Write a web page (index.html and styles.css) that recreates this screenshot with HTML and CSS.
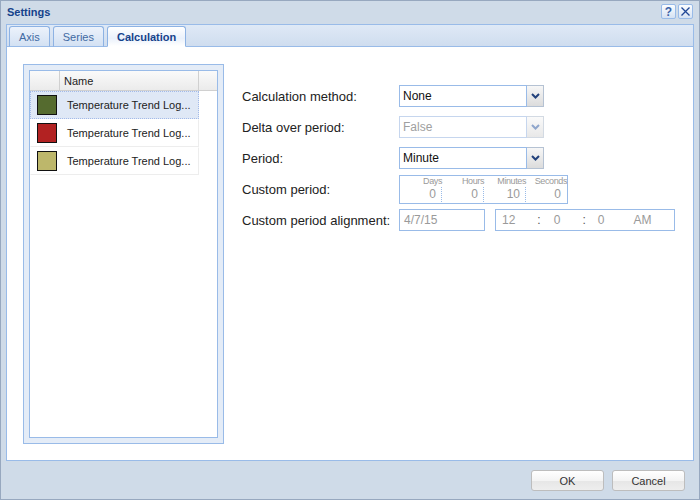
FILE: index.html
```html
<!DOCTYPE html>
<html>
<head>
<meta charset="utf-8">
<link rel="stylesheet" href="styles.css">
</head>
<body>
<div class="window">
  <div class="titlebar">
    <span class="title">Settings</span>
    <div class="tools">
      <span class="tool help">?</span>
      <span class="tool close"><svg width="11" height="11" viewBox="0 0 11 11"><path d="M1.5 1.5 L9.5 9.5 M9.5 1.5 L1.5 9.5" stroke="#1f4696" stroke-width="1.3" fill="none"/></svg></span>
    </div>
  </div>
  <div class="main">
    <div class="tabstrip">
      <div class="tab">Axis</div>
      <div class="tab">Series</div>
      <div class="tab active">Calculation</div>
    </div>
    <div class="body">
      <div class="gridpanel">
        <div class="grid">
          <div class="grid-header">
            <div class="hcell c1"></div>
            <div class="hcell c2">Name</div>
            <div class="hcell filler"></div>
          </div>
          <div class="row selected">
            <div class="cell c1"><span class="swatch sw-green"></span></div>
            <div class="cell c2">Temperature Trend Log...</div>
          </div>
          <div class="row">
            <div class="cell c1"><span class="swatch sw-red"></span></div>
            <div class="cell c2">Temperature Trend Log...</div>
          </div>
          <div class="row">
            <div class="cell c1"><span class="swatch sw-khaki"></span></div>
            <div class="cell c2">Temperature Trend Log...</div>
          </div>
        </div>
      </div>
      <div class="form">
        <div class="frow r1">
          <label class="flabel">Calculation method:</label>
          <div class="combo">
            <div class="combo-input">None</div>
            <div class="combo-trigger"><svg width="9" height="6" viewBox="0 0 9 6"><path d="M1 1 L4.5 4.5 L8 1" stroke="#23427c" stroke-width="2" fill="none"/></svg></div>
          </div>
        </div>
        <div class="frow r2">
          <label class="flabel">Delta over period:</label>
          <div class="combo disabled">
            <div class="combo-input">False</div>
            <div class="combo-trigger"><svg width="9" height="6" viewBox="0 0 9 6"><path d="M1 1 L4.5 4.5 L8 1" stroke="#8fa6cc" stroke-width="2" fill="none"/></svg></div>
          </div>
        </div>
        <div class="frow r3">
          <label class="flabel">Period:</label>
          <div class="combo">
            <div class="combo-input">Minute</div>
            <div class="combo-trigger"><svg width="9" height="6" viewBox="0 0 9 6"><path d="M1 1 L4.5 4.5 L8 1" stroke="#23427c" stroke-width="2" fill="none"/></svg></div>
          </div>
        </div>
        <div class="frow r4">
          <label class="flabel">Custom period:</label>
          <div class="period">
            <div class="pcol"><span class="plabel">Days</span><span class="pval">0</span></div>
            <div class="pcol"><span class="plabel">Hours</span><span class="pval">0</span></div>
            <div class="pcol"><span class="plabel">Minutes</span><span class="pval">10</span></div>
            <div class="pcol last"><span class="plabel">Seconds</span><span class="pval">0</span></div>
          </div>
        </div>
        <div class="frow r5">
          <label class="flabel">Custom period alignment:</label>
          <div class="datefield">4/7/15</div>
          <div class="timefield">
            <span class="t-h">12</span>
            <span class="t-sep s1">:</span>
            <span class="t-m">0</span>
            <span class="t-sep s2">:</span>
            <span class="t-s">0</span>
            <span class="t-ampm">AM</span>
          </div>
        </div>
      </div>
    </div>
  </div>
  <div class="footer">
    <button class="btn">OK</button>
    <button class="btn">Cancel</button>
  </div>
</div>
</body>
</html>
```

FILE: styles.css
```css
html, body {
  margin: 0;
  padding: 0;
}
body {
  font-family: "Liberation Sans", Arial, sans-serif;
  background: #fff;
}
.window {
  width: 700px;
  height: 500px;
  box-sizing: border-box;
  border: 1px solid #97a8bf;
  background: #cfdbe8;
  display: flex;
  flex-direction: column;
}
.titlebar {
  height: 23px;
  display: flex;
  align-items: center;
  justify-content: space-between;
  padding: 0 6px 0 6px;
  flex: none;
}
.title {
  font-size: 11px;
  font-weight: bold;
  color: #15428b;
  margin-top: -2px;
}
.tools {
  display: flex;
  gap: 2px;
  margin-top: -2px;
}
.tool {
  width: 13px;
  height: 13px;
  border: 1px solid #99bbe8;
  border-radius: 2px;
  background: linear-gradient(#fbfdff, #d5e2f3);
  display: flex;
  align-items: center;
  justify-content: center;
  font-size: 12px;
  font-weight: bold;
  color: #3c63a8;
  line-height: 1;
}
.main {
  flex: 1;
  margin: 0 5px;
  display: flex;
  flex-direction: column;
}
.tabstrip {
  height: 23px;
  box-sizing: border-box;
  border: 1px solid #99bbe8;
  background: linear-gradient(#dfe9f6, #cfddef);
  display: flex;
  align-items: flex-end;
  gap: 3px;
  padding-left: 2px;
  flex: none;
}
.tab {
  height: 21px;
  box-sizing: border-box;
  margin-bottom: -1px;
  padding: 0 9px;
  border: 1px solid #8db2e3;
  border-bottom-color: #99bbe8;
  border-radius: 3px 3px 0 0;
  background: linear-gradient(#ecf2fb, #d3e1f3);
  font-size: 11px;
  color: #416aa3;
  display: flex;
  align-items: center;
}
.tab.active {
  background: linear-gradient(#ffffff, #eaf1fb 60%, #ffffff);
  border-bottom-color: #ffffff;
  font-weight: bold;
  color: #15428b;
}
.body {
  flex: 1;
  background: #fff;
  border: 1px solid #99bbe8;
  border-top: none;
  display: flex;
  gap: 18px;
  padding: 17px 16px 16px 16px;
}
.gridpanel {
  width: 201px;
  box-sizing: border-box;
  border: 1px solid #99bbe8;
  background: #e4ecf7;
  padding: 5px;
  display: flex;
  flex: none;
}
.grid {
  flex: 1;
  border: 1px solid #99bbe8;
  background: #fff;
}
.grid-header {
  display: flex;
  height: 20px;
  box-sizing: border-box;
  border-bottom: 1px solid #d0d0d0;
  background: linear-gradient(#fafafa, #ebebeb);
}
.hcell {
  box-sizing: border-box;
  border-right: 1px solid #d0d0d0;
  font-size: 11px;
  color: #222;
  display: flex;
  align-items: center;
}
.hcell.c1 { width: 30px; }
.hcell.c2 { width: 139px; padding-left: 4px; }
.hcell.filler { flex: 1; border-right: none; }
.row {
  display: flex;
  width: 169px;
  height: 28px;
  box-sizing: border-box;
  border: 1px solid #ededed;
  border-top-color: #fff;
  border-left-color: #fff;
}
.row.selected {
  border: 1px dotted #a3bae9;
  background: #dfe8f6;
}
.cell {
  display: flex;
  align-items: center;
  font-size: 11px;
  color: #222;
  white-space: nowrap;
}
.cell.c1 { width: 29px; padding-left: 6px; box-sizing: border-box; }
.cell.c2 { padding-left: 7px; }
.swatch {
  width: 20px;
  height: 20px;
  box-sizing: border-box;
  border: 1px solid #111;
  display: block;
}
.sw-green { background: #556b2f; }
.sw-red { background: #b22222; }
.sw-khaki { background: #bdb76b; }
.form {
  display: flex;
  flex-direction: column;
  margin-top: 21px;
}
.frow {
  display: flex;
  align-items: center;
}
.r2, .r3 { margin-top: 9px; }
.r4 { margin-top: 6px; }
.r5 { margin-top: 5px; }
.flabel {
  width: 157px;
  font-size: 13px;
  color: #222;
  flex: none;
}
.combo {
  display: flex;
  width: 145px;
  height: 22px;
}
.combo-input {
  flex: 1;
  box-sizing: border-box;
  border: 1px solid #99bbe8;
  padding-left: 3px;
  font-size: 12px;
  color: #111;
  display: flex;
  align-items: center;
}
.combo-trigger {
  width: 17px;
  box-sizing: border-box;
  border: 1px solid #b5c2d3;
  border-left: none;
  background: linear-gradient(#f7f7f7, #dcdcdc);
  display: flex;
  align-items: center;
  justify-content: center;
}
.combo.disabled .combo-input {
  border-color: #c6d6ee;
  color: #a0a0a0;
}
.combo.disabled .combo-trigger {
  border-color: #d3dae3;
  background: linear-gradient(#fafafa, #e8e8e8);
}
.period {
  width: 169px;
  height: 29px;
  box-sizing: border-box;
  border: 1px solid #99bbe8;
  display: flex;
}
.pcol {
  width: 42px;
  display: flex;
  flex-direction: column;
  align-items: flex-end;
  position: relative;
}
.pcol.last { width: 41px; }
.pcol::after {
  content: "";
  position: absolute;
  right: 0;
  top: 11px;
  height: 15px;
  border-right: 1px dotted #99bbe8;
}
.pcol.last::after { display: none; }
.plabel {
  font-size: 9px;
  letter-spacing: -0.4px;
  color: #9a9a9a;
  line-height: 11px;
  margin-top: 0px;
  padding-right: 0px;
}
.pval {
  font-size: 12px;
  color: #9a9a9a;
  line-height: 15px;
  padding-right: 6px;
}
.datefield {
  width: 86px;
  height: 22px;
  box-sizing: border-box;
  border: 1px solid #99bbe8;
  font-size: 12px;
  color: #9a9a9a;
  padding-left: 4px;
  display: flex;
  align-items: center;
}
.timefield {
  width: 180px;
  height: 22px;
  box-sizing: border-box;
  border: 1px solid #99bbe8;
  margin-left: 10px;
  font-size: 12px;
  color: #9a9a9a;
  display: flex;
  align-items: center;
  padding-left: 6px;
}
.t-sep { color: #555; }
.s1 { margin-left: 22px; }
.t-m { margin-left: 13px; }
.s2 { margin-left: 22px; }
.t-s { margin-left: 12px; }
.t-ampm { margin-left: 29px; }
.footer {
  height: 38px;
  flex: none;
  display: flex;
  justify-content: flex-end;
  align-items: flex-start;
  gap: 8px;
  padding: 9px 14px 0 0;
  box-sizing: border-box;
}
.btn {
  width: 73px;
  height: 21px;
  margin: 0;
  padding: 0;
  border: 1px solid #bdbdbd;
  border-radius: 3px;
  background: linear-gradient(#ffffff, #f4f4f4 50%, #e6e6e6 51%, #eeeeee);
  font-family: "Liberation Sans", Arial, sans-serif;
  font-size: 11px;
  color: #333;
}
```
